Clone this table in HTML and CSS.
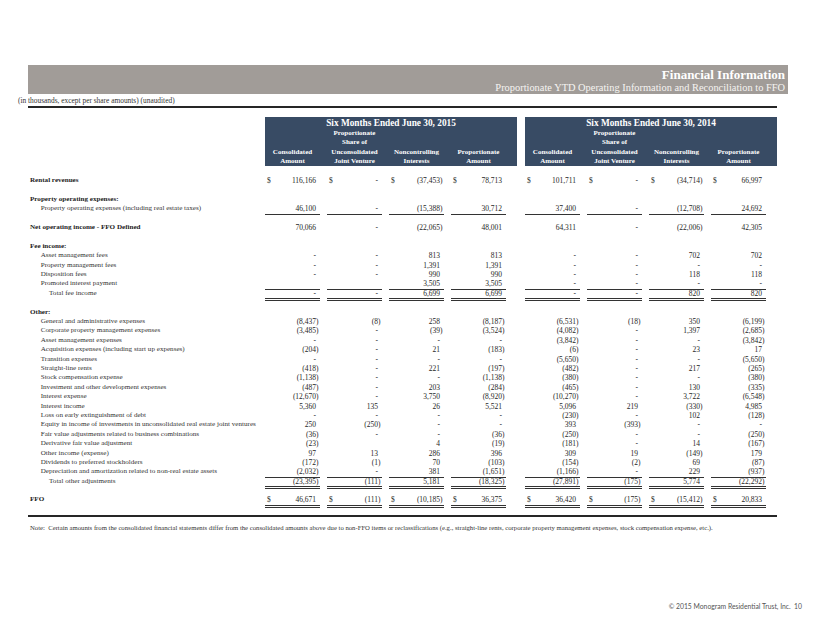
FILE: index.html
```html
<!DOCTYPE html>
<html lang="en">
<head>
<meta charset="utf-8">
<title>Financial Information</title>
<link rel="stylesheet" href="styles.css">
</head>
<body>
<header class="band">
  <h1>Financial Information</h1>
  <h2>Proportionate YTD Operating Information and Reconciliation to FFO</h2>
</header>
<p class="units">(in thousands, except per share amounts) (unaudited)</p>
<div class="rule"></div>

<section class="sheet">
  <div class="heads">
    <div class="box">
      <h3>Six Months Ended June 30, 2015</h3>
      <div class="cols">
        <div>Consolidated<br>Amount</div>
        <div>Proportionate<br>Share of<br>Unconsolidated<br>Joint Venture</div>
        <div>Noncontrolling<br>Interests</div>
        <div>Proportionate<br>Amount</div>
      </div>
    </div>
    <div class="box">
      <h3>Six Months Ended June 30, 2014</h3>
      <div class="cols">
        <div>Consolidated<br>Amount</div>
        <div>Proportionate<br>Share of<br>Unconsolidated<br>Joint Venture</div>
        <div>Noncontrolling<br>Interests</div>
        <div>Proportionate<br>Amount</div>
      </div>
    </div>
  </div>

  <div class="data">
    <div class="r"><span class="l b">Rental revenues</span><span class="c m"><span>$</span><span>116,166</span></span><span class="c m"><span>$</span><span>-</span></span><span class="c m n"><span>$</span><span>(37,453)</span></span><span class="c m"><span>$</span><span>78,713</span></span><span class="c m"><span>$</span><span>101,711</span></span><span class="c m"><span>$</span><span>-</span></span><span class="c m n"><span>$</span><span>(34,714)</span></span><span class="c m"><span>$</span><span>66,997</span></span></div>
    <div class="r"></div>
    <div class="r"><span class="l b">Property operating expenses:</span></div>
    <div class="r ru"><span class="l i1">Property operating expenses (including real estate taxes)</span><span class="c">46,100</span><span class="c">-</span><span class="c n">(15,388)</span><span class="c">30,712</span><span class="c">37,400</span><span class="c">-</span><span class="c n">(12,708)</span><span class="c">24,692</span></div>
    <div class="r"></div>
    <div class="r"><span class="l b">Net operating income - FFO Defined</span><span class="c">70,066</span><span class="c">-</span><span class="c n">(22,065)</span><span class="c">48,001</span><span class="c">64,311</span><span class="c">-</span><span class="c n">(22,006)</span><span class="c">42,305</span></div>
    <div class="r"></div>
    <div class="r"><span class="l b">Fee income:</span></div>
    <div class="r"><span class="l i1">Asset management fees</span><span class="c">-</span><span class="c">-</span><span class="c">813</span><span class="c">813</span><span class="c">-</span><span class="c">-</span><span class="c">702</span><span class="c">702</span></div>
    <div class="r"><span class="l i1">Property management fees</span><span class="c">-</span><span class="c">-</span><span class="c">1,391</span><span class="c">1,391</span><span class="c">-</span><span class="c">-</span><span class="c">-</span><span class="c">-</span></div>
    <div class="r"><span class="l i1">Disposition fees</span><span class="c">-</span><span class="c">-</span><span class="c">990</span><span class="c">990</span><span class="c">-</span><span class="c">-</span><span class="c">118</span><span class="c">118</span></div>
    <div class="r ru"><span class="l i1">Promoted interest payment</span><span class="c"></span><span class="c"></span><span class="c">3,505</span><span class="c">3,505</span><span class="c">-</span><span class="c">-</span><span class="c">-</span><span class="c">-</span></div>
    <div class="r rd"><span class="l i2">Total fee income</span><span class="c">-</span><span class="c">-</span><span class="c">6,699</span><span class="c">6,699</span><span class="c">-</span><span class="c">-</span><span class="c">820</span><span class="c">820</span></div>
    <div class="r"></div>
    <div class="r"><span class="l b">Other:</span></div>
    <div class="r"><span class="l i1">General and administrative expenses</span><span class="c n">(8,437)</span><span class="c n">(8)</span><span class="c">258</span><span class="c n">(8,187)</span><span class="c n">(6,531)</span><span class="c n">(18)</span><span class="c">350</span><span class="c n">(6,199)</span></div>
    <div class="r"><span class="l i1">Corporate property management expenses</span><span class="c n">(3,485)</span><span class="c">-</span><span class="c n">(39)</span><span class="c n">(3,524)</span><span class="c n">(4,082)</span><span class="c">-</span><span class="c">1,397</span><span class="c n">(2,685)</span></div>
    <div class="r"><span class="l i1">Asset management expenses</span><span class="c">-</span><span class="c">-</span><span class="c">-</span><span class="c">-</span><span class="c n">(3,842)</span><span class="c">-</span><span class="c">-</span><span class="c n">(3,842)</span></div>
    <div class="r"><span class="l i1">Acquisition expenses (including start up expenses)</span><span class="c n">(204)</span><span class="c">-</span><span class="c">21</span><span class="c n">(183)</span><span class="c n">(6)</span><span class="c">-</span><span class="c">23</span><span class="c">17</span></div>
    <div class="r"><span class="l i1">Transition expenses</span><span class="c">-</span><span class="c">-</span><span class="c">-</span><span class="c">-</span><span class="c n">(5,650)</span><span class="c">-</span><span class="c">-</span><span class="c n">(5,650)</span></div>
    <div class="r"><span class="l i1">Straight-line rents</span><span class="c n">(418)</span><span class="c">-</span><span class="c">221</span><span class="c n">(197)</span><span class="c n">(482)</span><span class="c">-</span><span class="c">217</span><span class="c n">(265)</span></div>
    <div class="r"><span class="l i1">Stock compensation expense</span><span class="c n">(1,138)</span><span class="c">-</span><span class="c">-</span><span class="c n">(1,138)</span><span class="c n">(380)</span><span class="c">-</span><span class="c">-</span><span class="c n">(380)</span></div>
    <div class="r"><span class="l i1">Investment and other development expenses</span><span class="c n">(487)</span><span class="c">-</span><span class="c">203</span><span class="c n">(284)</span><span class="c n">(465)</span><span class="c">-</span><span class="c">130</span><span class="c n">(335)</span></div>
    <div class="r"><span class="l i1">Interest expense</span><span class="c n">(12,670)</span><span class="c">-</span><span class="c">3,750</span><span class="c n">(8,920)</span><span class="c n">(10,270)</span><span class="c">-</span><span class="c">3,722</span><span class="c n">(6,548)</span></div>
    <div class="r"><span class="l i1">Interest income</span><span class="c">5,360</span><span class="c">135</span><span class="c">26</span><span class="c">5,521</span><span class="c">5,096</span><span class="c">219</span><span class="c n">(330)</span><span class="c">4,985</span></div>
    <div class="r"><span class="l i1">Loss on early extinguishment of debt</span><span class="c">-</span><span class="c">-</span><span class="c">-</span><span class="c">-</span><span class="c n">(230)</span><span class="c">-</span><span class="c">102</span><span class="c n">(128)</span></div>
    <div class="r"><span class="l i1">Equity in income of investments in unconsolidated real estate joint ventures</span><span class="c">250</span><span class="c n">(250)</span><span class="c">-</span><span class="c">-</span><span class="c">393</span><span class="c n">(393)</span><span class="c">-</span><span class="c">-</span></div>
    <div class="r"><span class="l i1">Fair value adjustments related to business combinations</span><span class="c n">(36)</span><span class="c">-</span><span class="c">-</span><span class="c n">(36)</span><span class="c n">(250)</span><span class="c">-</span><span class="c">-</span><span class="c n">(250)</span></div>
    <div class="r"><span class="l i1">Derivative fair value adjustment</span><span class="c n">(23)</span><span class="c"></span><span class="c">4</span><span class="c n">(19)</span><span class="c n">(181)</span><span class="c">-</span><span class="c">14</span><span class="c n">(167)</span></div>
    <div class="r"><span class="l i1">Other income (expense)</span><span class="c">97</span><span class="c">13</span><span class="c">286</span><span class="c">396</span><span class="c">309</span><span class="c">19</span><span class="c n">(149)</span><span class="c">179</span></div>
    <div class="r"><span class="l i1">Dividends to preferred stockholders</span><span class="c n">(172)</span><span class="c n">(1)</span><span class="c">70</span><span class="c n">(103)</span><span class="c n">(154)</span><span class="c n">(2)</span><span class="c">69</span><span class="c n">(87)</span></div>
    <div class="r ru"><span class="l i1">Depreciation and amortization related to non-real estate assets</span><span class="c n">(2,032)</span><span class="c">-</span><span class="c">381</span><span class="c n">(1,651)</span><span class="c n">(1,166)</span><span class="c">-</span><span class="c">229</span><span class="c n">(937)</span></div>
    <div class="r rd"><span class="l i2">Total other adjustments</span><span class="c n">(23,395)</span><span class="c n">(111)</span><span class="c">5,181</span><span class="c n">(18,325)</span><span class="c n">(27,891)</span><span class="c n">(175)</span><span class="c">5,774</span><span class="c n">(22,292)</span></div>
    <div class="r"></div>
    <div class="r rd"><span class="l b">FFO</span><span class="c m"><span>$</span><span>46,671</span></span><span class="c m n"><span>$</span><span>(111)</span></span><span class="c m n"><span>$</span><span>(10,185)</span></span><span class="c m"><span>$</span><span>36,375</span></span><span class="c m"><span>$</span><span>36,420</span></span><span class="c m n"><span>$</span><span>(175)</span></span><span class="c m n"><span>$</span><span>(15,412)</span></span><span class="c m"><span>$</span><span>20,833</span></span></div>
  </div>
</section>

<div class="rule rule-end"></div>
<p class="note">Note:&nbsp; Certain amounts from the consolidated financial statements differ from the consolidated amounts above due to non-FFO items or reclassifications (e.g., straight-line rents, corporate property management expenses, stock compensation expense, etc.).</p>
<footer class="foot">© 2015 Monogram Residential Trust, Inc.&nbsp; 10</footer>
</body>
</html>
```

FILE: styles.css
```css
* { box-sizing: border-box; margin: 0; padding: 0; }
html, body { background: #fff; }
body {
  width: 822px;
  height: 635px;
  overflow: hidden;
  padding-top: 65px;
  font-family: "Liberation Serif", "Times New Roman", serif;
  color: #2a2a2a;
}

.band {
  margin-left: 28px;
  width: 760px;
  height: 29px;
  background: #a19c98;
  color: #fff;
  text-align: right;
  padding: 3px 3px 0 0;
}
.band h1 { font-size: 13px; line-height: 14px; font-weight: bold; }
.band h2 { font-size: 10.4px; line-height: 12px; font-weight: normal; color: #f6f4f2; }

.units {
  margin: 3px 0 0 18px;
  font-size: 7.4px;
  line-height: 8px;
  color: #333;
  white-space: nowrap;
}

.rule {
  margin: 1px 0 0 28px;
  width: 749px;
  height: 2px;
  background: #262626;
}
.rule-end { margin-top: 9.8px; }

.sheet { margin-left: 28px; width: 749px; }

.heads {
  display: grid;
  grid-template-columns: 237px 252px 8px 252px;
  margin-top: 9px;
}
.box { grid-column: 2; background: #384b64; color: #fff; }
.box + .box { grid-column: 4; }
.box h3 { font-size: 9.3px; line-height: 12px; text-align: center; font-weight: bold; }
.cols { display: grid; grid-template-columns: repeat(4, 62px); align-items: end; }
.cols div {
  padding-right: 7px;
  text-align: center;
  font-size: 7px;
  font-weight: bold;
  line-height: 9.3px;
  white-space: nowrap;
}

.data { margin-top: 10px; font-size: 7.1px; color: #262626; }
.r {
  display: grid;
  grid-template-columns: 237px repeat(4, 62px) 12px repeat(4, 62px);
  height: 9.4px;
  line-height: 9.4px;
}
.r > :nth-child(6) { grid-column: 7; }
.l { padding-left: 2px; white-space: nowrap; color: #333; }
.b { font-weight: bold; color: #1c1c1c; }
.i1 { padding-left: 12.7px; }
.i2 { padding-left: 21px; }
.c {
  width: 55px;
  text-align: right;
  padding-right: 4px;
  white-space: nowrap;
  font-size: 7.5px;
}
.c.n { padding-right: 1.5px; }
.c.m { display: flex; justify-content: space-between; padding-left: 2px; }
.ru .c { box-shadow: 0 1px 0 #333; }
.rd .c { box-shadow: 0 1px 0 #333, 0 2px 0 #fff, 0 3px 0 #333; }

.note {
  margin: 7.3px 0 0 30px;
  font-size: 6.7px;
  line-height: 8px;
  color: #333;
  white-space: nowrap;
}

.foot {
  margin-top: 70px;
  padding-right: 20px;
  text-align: right;
  font-family: Lato, "Liberation Sans", sans-serif;
  font-size: 6.8px;
  line-height: 9px;
  color: #555;
}
```
